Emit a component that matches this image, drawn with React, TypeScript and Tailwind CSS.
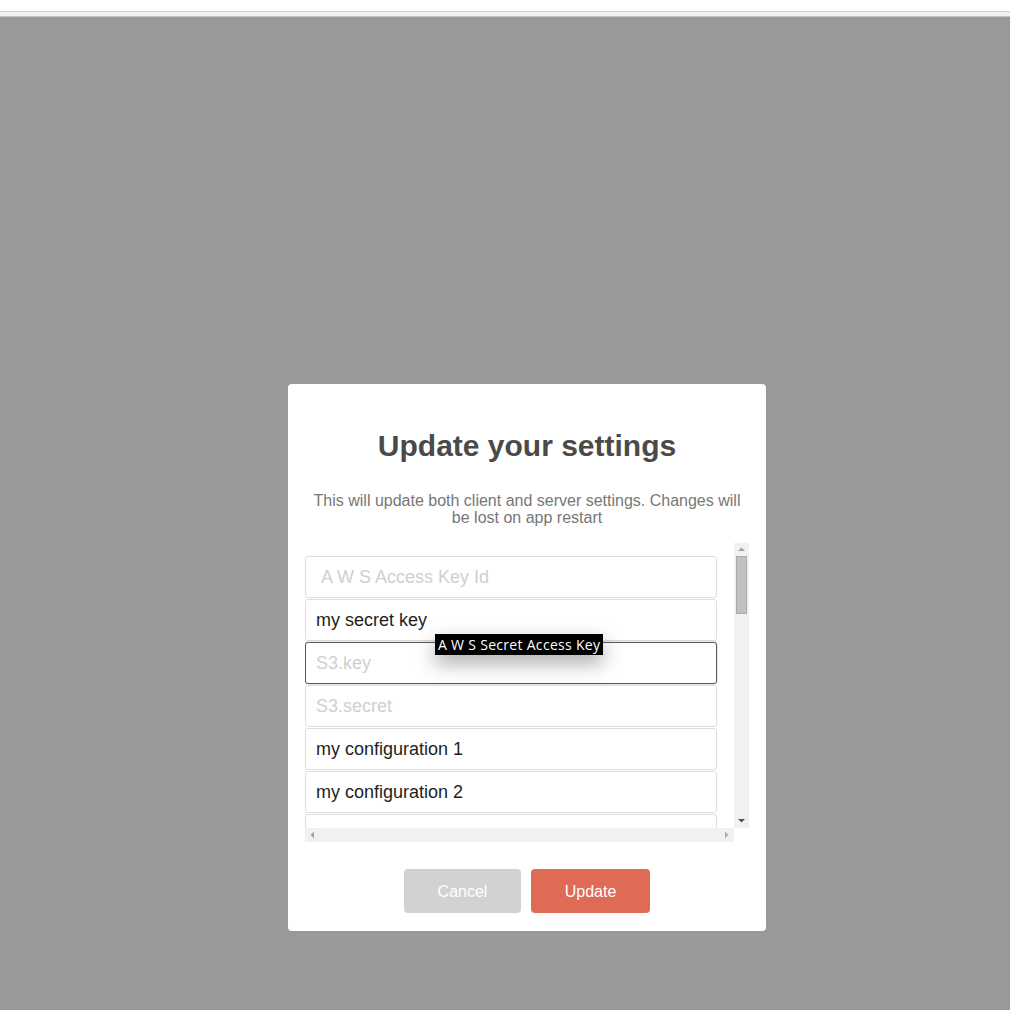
import React from "react";

const fields = [
  { value: "", placeholder: "A W S Access Key Id", extraPad: true },
  { value: "my secret key", placeholder: "A W S Secret Access Key" },
  { value: "", placeholder: "S3.key", focused: true },
  { value: "", placeholder: "S3.secret" },
  { value: "my configuration 1", placeholder: "" },
  { value: "my configuration 2", placeholder: "" },
  { value: "", placeholder: "" },
];

const SettingsModal = () => {
  return (
    <div className="relative w-[478px] rounded-[4px] bg-white px-[17px] pt-[44px] pb-[18px]">
      <h1 className="text-center text-[30px] leading-[36px] font-bold text-[#4a4a4a]">
        Update your settings
      </h1>
      <p className="mt-[28px] text-center text-[16px] leading-[17px] text-[#777]">
        This will update both client and server settings. Changes will be lost
        on app restart
      </p>

      {/* scroll box, scrollbars drawn by hand */}
      <div className="mt-[17px] flex h-[299px] w-[444px] flex-col">
        <div className="flex h-[285px]">
          <div className="h-full w-[429px] overflow-hidden pt-[13px]">
            {fields.map((f, i) => (
              <input
                key={i}
                readOnly
                value={f.value}
                placeholder={f.placeholder}
                className={
                  "mb-px block h-[42px] w-[412px] rounded-[3px] border bg-white text-[18px] text-[#1e1e1e] outline-none placeholder:text-[#cfcfcf] " +
                  (f.extraPad ? "px-[15px] " : "px-[10px] ") +
                  (f.focused
                    ? "border-[#5a5a5a] shadow-[0_0_2px_rgba(0,0,0,0.35)]"
                    : "border-[#dedede]")
                }
              />
            ))}
          </div>
          <div className="flex h-full w-[15px] flex-col items-center bg-[#f1f1f1]">
            <svg width="15" height="13" viewBox="0 0 15 13">
              <path d="M4 8 L7.5 4.5 L11 8 Z" fill="#a3a3a3" />
            </svg>
            <div className="h-[58px] w-[11px] border border-[#aaaaaa] bg-[#c1c1c1]" />
            <div className="flex-1" />
            <svg width="15" height="14" viewBox="0 0 15 14">
              <path d="M4 5 L11 5 L7.5 8.5 Z" fill="#505050" />
            </svg>
          </div>
        </div>
        <div className="flex h-[14px]">
          <div className="flex h-full w-[429px] items-center justify-between bg-[#f1f1f1] px-[4px]">
            <svg width="6" height="14" viewBox="0 0 6 14">
              <path d="M5 3.5 L1.5 7 L5 10.5 Z" fill="#a3a3a3" />
            </svg>
            <svg width="6" height="14" viewBox="0 0 6 14">
              <path d="M1 3.5 L4.5 7 L1 10.5 Z" fill="#b0b0b0" />
            </svg>
          </div>
          <div className="h-full w-[15px] bg-white" />
        </div>
      </div>

      <div className="mt-[27px] flex justify-center gap-[10px]">
        <button className="h-[44px] w-[117px] rounded-[4px] bg-[#d2d2d2] pt-px text-[16px] text-white">
          Cancel
        </button>
        <button className="h-[44px] w-[119px] rounded-[4px] bg-[#df6a56] pt-px text-[16px] text-white">
          Update
        </button>
      </div>

      {/* native-looking tooltip */}
      <div
        className="absolute top-[250px] left-[147px] bg-black px-[3px] text-[14px] leading-[21px] tracking-[0.3px] text-white shadow-[0_8px_20px_rgba(0,0,0,0.35)]"
        style={{ fontFamily: "'Open Sans', sans-serif" }}
      >
        A W S Secret Access Key
      </div>
    </div>
  );
};

export default function App() {
  return (
    <div
      className="flex h-screen flex-col"
      style={{ fontFamily: "'Liberation Sans', Arial, sans-serif" }}
    >
      <div className="h-[11px] bg-white" />
      <div className="h-px bg-[#cfcfcf]" />
      <div className="h-[4px] bg-[#f1f1f1]" />
      <div className="h-px bg-[#c4c4c4]" />
      <div className="flex-1 bg-[#999999] pt-[367px] pl-[288px]">
        <SettingsModal />
      </div>
    </div>
  );
}
